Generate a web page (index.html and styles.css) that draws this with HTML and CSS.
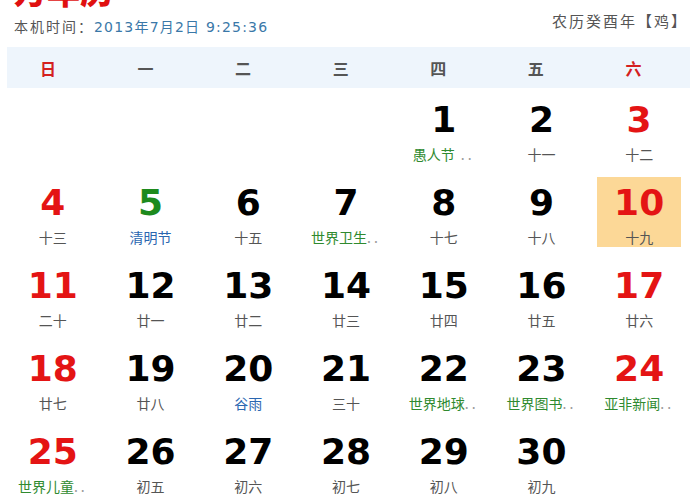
FILE: index.html
```html
<!DOCTYPE html>
<html lang="zh-CN">
<head>
<meta charset="utf-8">
<title>万年历</title>
<link rel="stylesheet" href="styles.css">
</head>
<body>
<div class="page">
  <header class="top">
    <div class="brand">
      <div class="title">万年历</div>
      <div class="clock"><span class="clock-label">本机时间：</span><span class="clock-value">2013年7月2日 9:25:36</span></div>
    </div>
    <div class="lunar-year">农历癸酉年【鸡】</div>
  </header>

  <div class="weekbar">
    <div class="wd red">日</div>
    <div class="wd">一</div>
    <div class="wd">二</div>
    <div class="wd">三</div>
    <div class="wd">四</div>
    <div class="wd">五</div>
    <div class="wd red">六</div>
  </div>

  <div class="days">
    <div class="day empty"></div>
    <div class="day empty"></div>
    <div class="day empty"></div>
    <div class="day empty"></div>
    <div class="day"><div class="box"><div class="num">1</div><div class="lunar fest">愚人节<span class="dots"> ..</span></div></div></div>
    <div class="day"><div class="box"><div class="num">2</div><div class="lunar">十一</div></div></div>
    <div class="day"><div class="box"><div class="num red">3</div><div class="lunar">十二</div></div></div>

    <div class="day"><div class="box"><div class="num red">4</div><div class="lunar">十三</div></div></div>
    <div class="day"><div class="box"><div class="num green">5</div><div class="lunar term">清明节</div></div></div>
    <div class="day"><div class="box"><div class="num">6</div><div class="lunar">十五</div></div></div>
    <div class="day"><div class="box"><div class="num">7</div><div class="lunar fest">世界卫生<span class="dots">..</span></div></div></div>
    <div class="day"><div class="box"><div class="num">8</div><div class="lunar">十七</div></div></div>
    <div class="day"><div class="box"><div class="num">9</div><div class="lunar">十八</div></div></div>
    <div class="day"><div class="box today"><div class="num red">10</div><div class="lunar">十九</div></div></div>

    <div class="day"><div class="box"><div class="num red">11</div><div class="lunar">二十</div></div></div>
    <div class="day"><div class="box"><div class="num">12</div><div class="lunar">廿一</div></div></div>
    <div class="day"><div class="box"><div class="num">13</div><div class="lunar">廿二</div></div></div>
    <div class="day"><div class="box"><div class="num">14</div><div class="lunar">廿三</div></div></div>
    <div class="day"><div class="box"><div class="num">15</div><div class="lunar">廿四</div></div></div>
    <div class="day"><div class="box"><div class="num">16</div><div class="lunar">廿五</div></div></div>
    <div class="day"><div class="box"><div class="num red">17</div><div class="lunar">廿六</div></div></div>

    <div class="day"><div class="box"><div class="num red">18</div><div class="lunar">廿七</div></div></div>
    <div class="day"><div class="box"><div class="num">19</div><div class="lunar">廿八</div></div></div>
    <div class="day"><div class="box"><div class="num">20</div><div class="lunar term">谷雨</div></div></div>
    <div class="day"><div class="box"><div class="num">21</div><div class="lunar">三十</div></div></div>
    <div class="day"><div class="box"><div class="num">22</div><div class="lunar fest">世界地球<span class="dots">..</span></div></div></div>
    <div class="day"><div class="box"><div class="num">23</div><div class="lunar fest">世界图书<span class="dots">..</span></div></div></div>
    <div class="day"><div class="box"><div class="num red">24</div><div class="lunar fest">亚非新闻<span class="dots">..</span></div></div></div>

    <div class="day"><div class="box"><div class="num red">25</div><div class="lunar fest">世界儿童<span class="dots">..</span></div></div></div>
    <div class="day"><div class="box"><div class="num">26</div><div class="lunar">初五</div></div></div>
    <div class="day"><div class="box"><div class="num">27</div><div class="lunar">初六</div></div></div>
    <div class="day"><div class="box"><div class="num">28</div><div class="lunar">初七</div></div></div>
    <div class="day"><div class="box"><div class="num">29</div><div class="lunar">初八</div></div></div>
    <div class="day"><div class="box"><div class="num">30</div><div class="lunar">初九</div></div></div>
  </div>
</div>
</body>
</html>
```

FILE: styles.css
```css
html, body {
  margin: 0;
  padding: 0;
  background: #ffffff;
}

.page {
  width: 700px;
  height: 500px;
  overflow: hidden;
  font-family: "Noto Sans CJK SC", "DejaVu Sans", sans-serif;
}

.top {
  display: flex;
  justify-content: space-between;
  align-items: flex-start;
  height: 47px;
  padding: 0 12px 0 14px;
}

.brand {
  display: flex;
  flex-direction: column;
}

.title {
  font-size: 33px;
  line-height: 33px;
  font-weight: 900;
  color: #e01010;
  margin-top: -26px;
}

.clock {
  margin-top: 11px;
  font-size: 14px;
  line-height: 16px;
  letter-spacing: 1.2px;
  font-family: "DejaVu Sans", "Noto Sans CJK SC", sans-serif;
}

.clock-label {
  color: #555555;
  font-family: "Noto Sans CJK SC", sans-serif;
  letter-spacing: 2px;
}

.clock-value {
  color: #3a78a8;
}

.lunar-year {
  margin-top: 12px;
  font-size: 15px;
  line-height: 18px;
  color: #555555;
  letter-spacing: 2px;
}

.weekbar {
  display: grid;
  grid-template-columns: repeat(7, 1fr);
  height: 41px;
  margin: 0 10px 0 7px;
  background: #eef5fc;
  align-items: center;
}

.wd {
  padding-right: 15.6px;
  text-align: center;
  font-size: 16px;
  font-weight: 700;
  color: #555555;
}

.wd.red {
  color: #d42020;
}

.days {
  display: grid;
  grid-template-columns: repeat(7, 1fr);
  grid-auto-rows: 83px;
  width: 684px;
  margin-left: 4px;
}

.box {
  height: 70px;
  margin: 6px 7px 7px 7px;
  display: flex;
  flex-direction: column;
  align-items: center;
}

.box.today {
  background: #fcd897;
}

.num {
  padding-top: 8px;
  font-family: "DejaVu Sans", sans-serif;
  font-weight: 700;
  font-size: 36px;
  line-height: 36px;
  color: #000000;
}

.num.red {
  color: #e41414;
}

.num.green {
  color: #1d8a1d;
}

.lunar {
  margin-top: 8px;
  font-size: 14px;
  line-height: 16px;
  color: #555555;
  white-space: nowrap;
}

.lunar.fest {
  color: #2f8a2f;
}

.lunar.term {
  color: #2a66b0;
}

.dots {
  color: #9a9a9a;
  letter-spacing: 3px;
}
```
